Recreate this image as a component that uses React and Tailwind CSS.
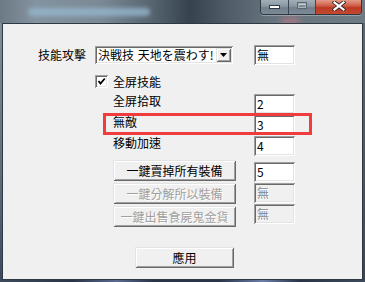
export default function App() {
  const sunken =
    "shadow-[inset_1px_1px_0_#a0a0a0,inset_-1px_-1px_0_#ffffff,inset_2px_2px_0_#696969,inset_-2px_-2px_0_#e3e3e3]";
  const raised =
    "shadow-[inset_1px_1px_0_#e3e3e3,inset_-1px_-1px_0_#696969,inset_2px_2px_0_#ffffff,inset_-2px_-2px_0_#a0a0a0]";

  const Box = ({ children, disabled }) => (
    <div
      className={
        disabled
          ? "w-[41px] h-[20px] bg-[#f0f0f0] flex items-center pl-[3px] text-[#8a8a8a] [text-shadow:1px_1px_0_#ffffff] shadow-[inset_1px_1px_0_#a0a0a0,inset_-1px_-1px_0_#ffffff,inset_2px_2px_0_#696969,inset_-2px_-2px_0_#e3e3e3]"
          : "w-[41px] h-[20px] bg-white flex items-center pl-[3px] text-black shadow-[inset_1px_1px_0_#a0a0a0,inset_-1px_-1px_0_#ffffff,inset_2px_2px_0_#696969,inset_-2px_-2px_0_#e3e3e3]"
      }
    >
      <span className="leading-[14px]">{children}</span>
    </div>
  );

  const Btn = ({ children, disabled }) => (
    <div
      className={
        disabled
          ? "w-[123px] h-[21px] bg-[#f0f0f0] flex items-center justify-center text-[#a0a0a0] [text-shadow:1px_1px_0_#ffffff] shadow-[inset_1px_1px_0_#e3e3e3,inset_-1px_-1px_0_#696969,inset_2px_2px_0_#ffffff,inset_-2px_-2px_0_#a0a0a0]"
          : "w-[123px] h-[21px] bg-[#f0f0f0] flex items-center justify-center text-black shadow-[inset_1px_1px_0_#e3e3e3,inset_-1px_-1px_0_#696969,inset_2px_2px_0_#ffffff,inset_-2px_-2px_0_#a0a0a0]"
      }
    >
      <span className="leading-[14px]">{children}</span>
    </div>
  );

  return (
    <div className="w-[365px] h-[282px] overflow-hidden font-['Noto_Sans_CJK_TC','Noto_Sans_CJK_JP',sans-serif] text-[12px] text-black">
      {/* Title bar */}
      <div className="relative h-[23px] overflow-hidden bg-[linear-gradient(90deg,#6c7a85_0%,#8493a0_10%,#7a8995_28%,#55636e_42%,#36434e_52%,#4f5c67_62%,#66737d_74%,#6f7b84_100%)]">
        <div className="absolute left-[28px] top-[8px] w-[122px] h-[8px] rounded-full bg-[#96b8cc] opacity-80 blur-[2px]" />
        <div className="absolute left-[280px] top-[17px] w-[20px] h-[10px] rounded-full bg-[#c07a86] opacity-60 blur-[3px]" />
        <div className="absolute right-[3px] top-0 flex h-[15px] rounded-b-[4px] border border-t-0 border-[#2c3844] overflow-hidden shadow-[0_1px_0_rgba(255,255,255,0.3)]">
          <div className="w-[28px] h-full border-r border-[#3a4651] bg-[linear-gradient(180deg,#a3afb8_0%,#8896a1_45%,#717f8b_55%,#7d8b96_100%)] flex items-start justify-center pt-[5px]">
            <div className="w-[11px] h-[4px] bg-white border border-[#2e3a46]" />
          </div>
          <div className="w-[27px] h-full border-r border-[#3a4651] bg-[linear-gradient(180deg,#a3afb8_0%,#8896a1_45%,#717f8b_55%,#7d8b96_100%)] flex items-start justify-center pt-[2px]">
            <div className="w-[10px] h-[7px] border border-[#5a6570] bg-[#a9b3ba] flex items-center justify-center">
              <div className="w-[6px] h-[3px] bg-[#7e8a94] border-t border-[#c9d0d5]" />
            </div>
          </div>
          <div className="w-[45px] h-full bg-[linear-gradient(180deg,#e29b88_0%,#d0604a_40%,#bb3a24_55%,#c4492f_100%)] flex items-start justify-center pt-[1px]">
            <svg width="14" height="10" viewBox="0 0 14 10">
              <path d="M2.5 1.5 L11.5 8.5 M11.5 1.5 L2.5 8.5" stroke="#3a2a2a" strokeWidth="4" strokeLinecap="square" />
              <path d="M2.5 1.5 L11.5 8.5 M11.5 1.5 L2.5 8.5" stroke="#ffffff" strokeWidth="2.2" strokeLinecap="square" />
            </svg>
          </div>
        </div>
      </div>

      {/* Middle */}
      <div className="flex h-[257px]">
        <div className="w-[2px] bg-[linear-gradient(180deg,#7f8e99,#5f6d7a_60%,#3c4a5e)]" />
        <div className="relative w-[361px] border border-[#2d3945] bg-[#f0f0f0]">
          {/* Row A */}
          <div className="mt-[21px] flex h-[20px] items-center">
            <span className="ml-[35px] w-[48px] leading-[14px] whitespace-nowrap">技能攻擊</span>
            <div className={"ml-[9px] w-[138px] h-[18px] bg-white flex p-[2px] " + sunken}>
              <div className="flex-1 overflow-hidden whitespace-nowrap pl-[1px] leading-[14px] [word-spacing:1px]">決戦技 天地を震わす!</div>
              <div className={"w-[15px] h-[14px] bg-[#f0f0f0] flex items-center justify-center " + raised}>
                <svg width="7" height="4" viewBox="0 0 7 4">
                  <polygon points="0,0 7,0 3.5,4" fill="#000" />
                </svg>
              </div>
            </div>
            <div className="ml-[21px]">
              <Box>無</Box>
            </div>
          </div>

          {/* Section B */}
          <div className="flex">
            <div className="w-[251px]">
              <div className="mt-[10px] ml-[92px] flex h-[13px] items-center">
                <div className={"w-[13px] h-[13px] bg-white flex items-center justify-center " + sunken}>
                  <svg width="9" height="9" viewBox="0 0 9 9">
                    <path d="M1.5 4 L3.5 6.5 L7.8 1.5" stroke="#000" strokeWidth="1.8" fill="none" />
                  </svg>
                </div>
                <span className="ml-[5px] leading-[14px]">全屏技能</span>
              </div>
              <div className="pl-[110px] flex flex-col">
                <span className="mt-[6px] leading-[14px]">全屏拾取</span>
                <span className="mt-[7px] leading-[14px]">無敵</span>
                <span className="mt-[7px] leading-[14px]">移動加速</span>
              </div>
            </div>
            <div className="mt-[29px] flex flex-col gap-[1px]">
              <Box>2</Box>
              <Box>3</Box>
              <Box>4</Box>
            </div>
          </div>

          {/* Section C */}
          <div className="flex">
            <div className="w-[251px] pl-[110px] pt-[4px] flex flex-col gap-[2px]">
              <Btn>一鍵賣掉所有裝備</Btn>
              <Btn disabled>一鍵分解所以裝備</Btn>
              <Btn disabled>一鍵出售食屍鬼金貨</Btn>
            </div>
            <div className="pt-[6px] flex flex-col gap-[1px]">
              <Box>5</Box>
              <Box disabled>無</Box>
              <Box disabled>無</Box>
            </div>
          </div>

          {/* Apply */}
          <div className="mt-[20px] ml-[132px] w-[99px]">
            <div className={"w-[99px] h-[21px] bg-[#f0f0f0] flex items-center justify-center " + raised}>
              <span className="leading-[14px]">應用</span>
            </div>
          </div>

          {/* Red annotation */}
          <div className="absolute left-[100px] top-[89px] w-[209px] h-[22px] border-[3px] border-[#f03c3c]" />
        </div>
        <div className="w-[2px] bg-[linear-gradient(180deg,#5c6872,#3c4652)]" />
      </div>

      {/* Bottom frame */}
      <div className="h-[2px] bg-[linear-gradient(90deg,#3d4a5c,#2a3448_20%,#5a6a90_32%,#2a3448_42%,#2a3448_60%,#6b7fa8_72%,#2a3448_82%,#3d4a5c)]" />
    </div>
  );
}
